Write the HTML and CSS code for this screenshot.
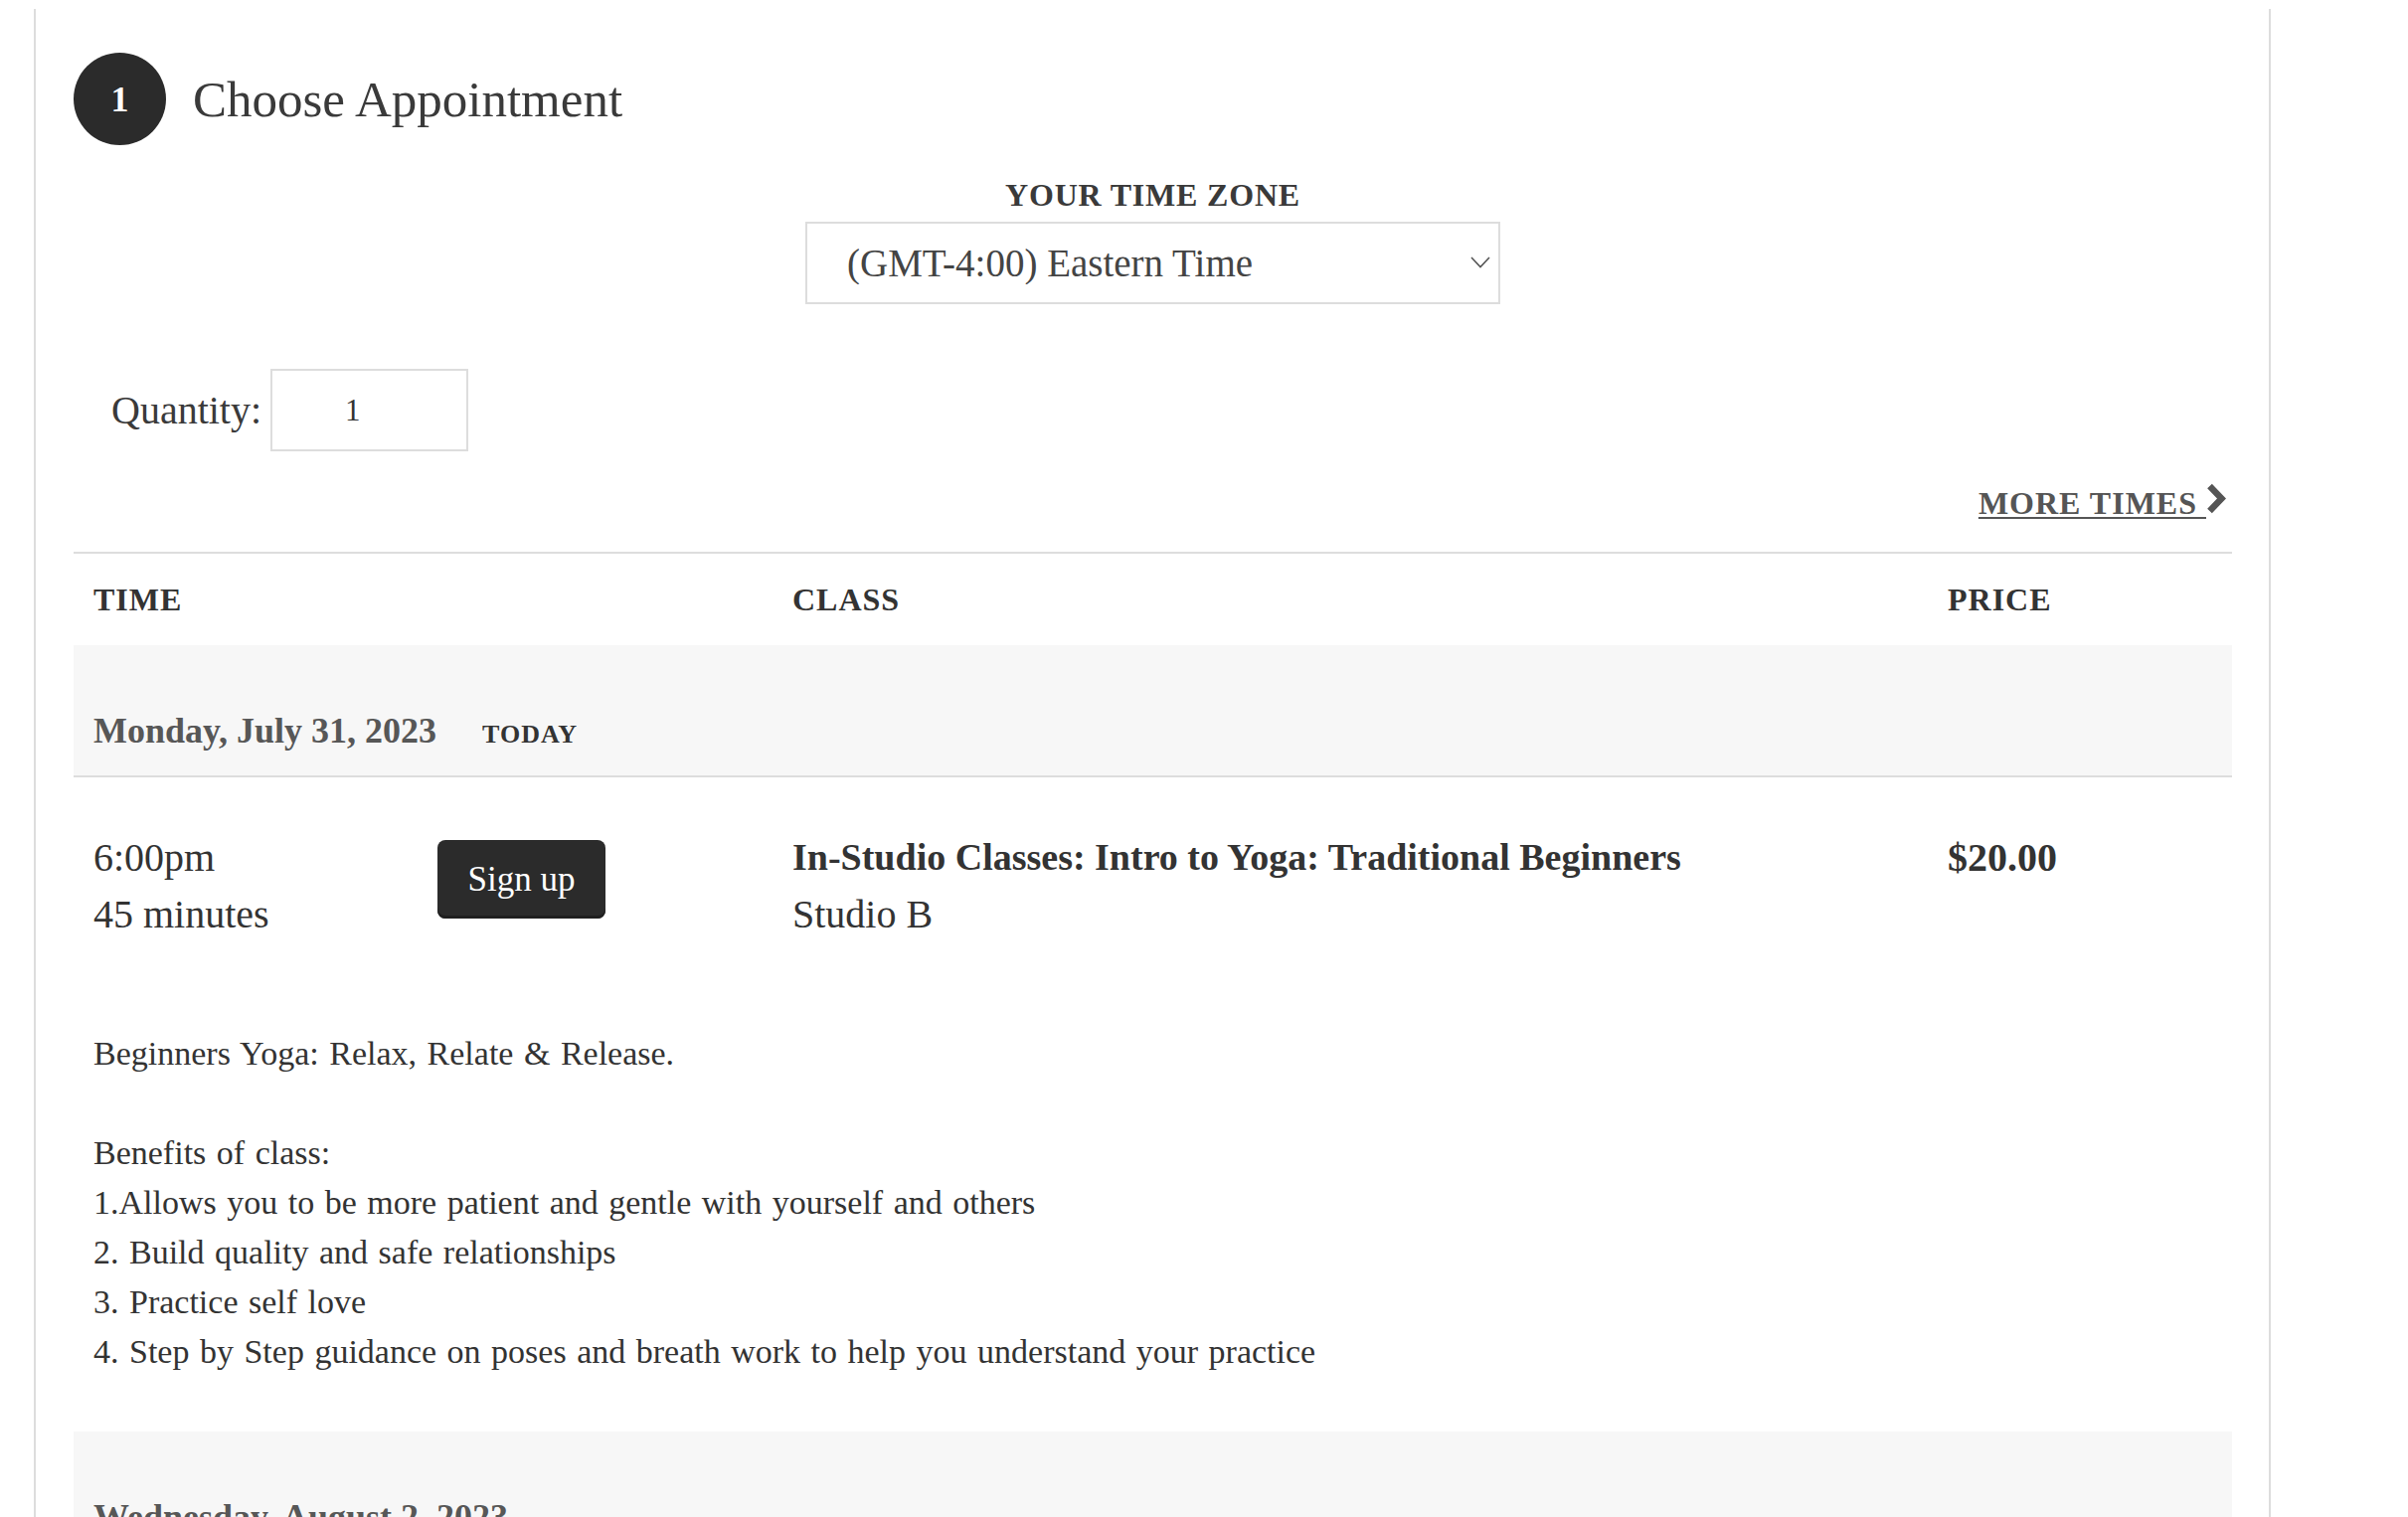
FILE: index.html
```html
<!DOCTYPE html>
<html lang="en">
<head>
<meta charset="utf-8">
<title>Choose Appointment</title>
<link rel="stylesheet" href="styles.css">
</head>
<body>
<div class="panel">
  <div class="step-head">
    <span class="step-num">1</span>
    <h2 class="step-title">Choose Appointment</h2>
  </div>

  <div class="tz">
    <label class="tz-label" for="tz">YOUR TIME ZONE</label>
    <div class="tz-select-wrap">
      <select id="tz" class="tz-select">
        <option>(GMT-4:00) Eastern Time</option>
      </select>
      <svg class="tz-chevron" width="20" height="12" viewBox="0 0 20 12"><polyline points="1,1 10,10.5 19,1" fill="none" stroke="#555" stroke-width="1.6"/></svg>
    </div>
  </div>

  <div class="qty">
    <label class="qty-label" for="qty">Quantity:</label>
    <input id="qty" class="qty-input" type="text" value="1">
  </div>

  <div class="more">
    <a class="more-link" href="#"><span class="more-text">MORE TIMES&nbsp;</span><svg class="more-chevron" width="22" height="31" viewBox="0 0 22 31"><polyline points="3.5,3 15.5,15.5 3.5,28" fill="none" stroke="#555" stroke-width="6.5" stroke-linejoin="miter"/></svg></a>
  </div>

  <div class="schedule">
    <div class="row head">
      <div>TIME</div>
      <div>CLASS</div>
      <div>PRICE</div>
    </div>

    <div class="day">
      <span class="date">Monday, July 31, 2023</span>
      <span class="today">TODAY</span>
    </div>

    <div class="row class-row">
      <div class="time-cell">
        <div class="time">6:00pm<br>45 minutes</div>
        <button class="signup" type="button">Sign up</button>
      </div>
      <div class="class-cell">
        <div class="title">In-Studio Classes: Intro to Yoga: Traditional Beginners</div>
        <div class="room">Studio B</div>
      </div>
      <div class="price">$20.00</div>
    </div>

    <div class="desc">
      Beginners Yoga: Relax, Relate &amp; Release.<br>
      <br>
      Benefits of class:<br>
      1.Allows you to be more patient and gentle with yourself and others<br>
      2. Build quality and safe relationships<br>
      3. Practice self love<br>
      4. Step by Step guidance on poses and breath work to help you understand your practice
    </div>

    <div class="day next-day">
      <span class="date">Wednesday, August 2, 2023</span>
    </div>
  </div>
</div>
</body>
</html>
```

FILE: styles.css
```css
body {
  margin: 0;
  background: #fff;
  color: #333;
  font-family: "Liberation Serif", "Times New Roman", serif;
}

.panel {
  margin: 9px 0 0 34px;
  width: 2250px;
  box-sizing: border-box;
  border-left: 2px solid #ddd;
  border-right: 2px solid #ddd;
  padding: 44px 37px 0 38px;
}

/* Step heading */
.step-head {
  display: flex;
  align-items: center;
  gap: 27px;
}

.step-num {
  width: 93px;
  height: 93px;
  border-radius: 50%;
  background: #2b2b2b;
  color: #fff;
  display: flex;
  align-items: center;
  justify-content: center;
  font-size: 36px;
  font-weight: bold;
}

.step-title {
  margin: 2px 0 0;
  font-size: 51px;
  font-weight: normal;
  line-height: 1;
  color: #3a3a3a;
}

/* Time zone */
.tz {
  display: flex;
  flex-direction: column;
  align-items: center;
  margin-top: 34px;
}

.tz-label {
  font-size: 32px;
  font-weight: bold;
  letter-spacing: 0.8px;
  line-height: 1;
  color: #3a3a3a;
}

.tz-select-wrap {
  position: relative;
  margin-top: 11px;
  width: 699px;
}

.tz-select {
  display: block;
  -webkit-appearance: none;
  appearance: none;
  width: 100%;
  height: 83px;
  box-sizing: border-box;
  border: 2px solid #ddd;
  border-radius: 0;
  background: #fff;
  font-family: "Liberation Serif", "Times New Roman", serif;
  font-size: 39px;
  color: #444;
  padding: 0 40px 0 40px;
  outline: none;
}

.tz-chevron {
  position: absolute;
  right: 10px;
  top: 35px;
  pointer-events: none;
}

/* Quantity */
.qty {
  display: flex;
  align-items: center;
  gap: 9px;
  margin: 65px 0 0 38px;
}

.qty-label {
  font-size: 40px;
  color: #3a3a3a;
}

.qty-input {
  width: 199px;
  height: 83px;
  box-sizing: border-box;
  border: 2px solid #ddd;
  border-radius: 0;
  padding: 0 0 0 73px;
  font-family: "Liberation Serif", "Times New Roman", serif;
  font-size: 31px;
  color: #333;
  outline: none;
}

/* More times */
.more {
  display: flex;
  justify-content: flex-end;
  margin-top: 32px;
  padding-right: 4px;
}

.more-link {
  display: flex;
  align-items: baseline;
  color: #555;
  text-decoration: none;
}

.more-text {
  font-size: 32px;
  font-weight: bold;
  letter-spacing: 1px;
  line-height: 1;
  text-decoration: underline;
  text-decoration-thickness: 2px;
  text-underline-offset: 3px;
}

.more-chevron {
  display: block;
}

/* Schedule table */
.schedule {
  margin-top: 33px;
  border-top: 2px solid #ddd;
}

.row {
  display: grid;
  grid-template-columns: 703px 1162px 1fr;
}

.row > div {
  padding-left: 20px;
}

.head {
  height: 92px;
  align-items: center;
  font-size: 32px;
  font-weight: bold;
  letter-spacing: 1px;
  line-height: 1;
  color: #333;
}

.day {
  display: flex;
  align-items: baseline;
  gap: 46px;
  background: #f7f7f7;
  border-bottom: 2px solid #ddd;
  padding: 68px 20px 27px;
}

.date {
  font-size: 36px;
  font-weight: bold;
  line-height: 1;
  color: #575757;
}

.today {
  font-size: 26px;
  font-weight: bold;
  letter-spacing: 1px;
  line-height: 1;
  color: #333;
}

.class-row {
  padding-top: 52px;
  font-size: 40px;
  line-height: 57px;
  color: #333;
}

.time-cell {
  display: flex;
  align-items: flex-start;
}

.time {
  width: 346px;
  flex: none;
}

.signup {
  margin-top: 11px;
  width: 169px;
  height: 79px;
  border: none;
  border-radius: 8px;
  background: #2b2b2b;
  box-shadow: inset 0 -3px 0 #1f1f1f;
  color: #fff;
  font-family: "Liberation Serif", "Times New Roman", serif;
  font-size: 35px;
  line-height: 1;
  padding: 0;
  cursor: pointer;
}

.title {
  font-size: 38px;
  font-weight: bold;
}

.price {
  font-weight: bold;
}

.desc {
  margin-top: 87px;
  padding-left: 20px;
  font-size: 34px;
  word-spacing: 2px;
  line-height: 50px;
  color: #333;
}

.next-day {
  margin-top: 55px;
}
```
